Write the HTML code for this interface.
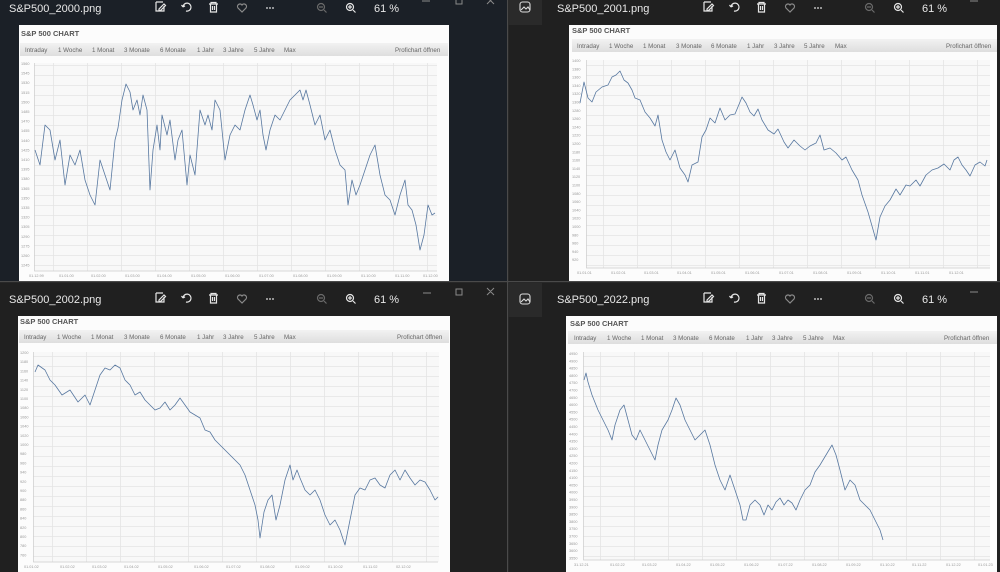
<!DOCTYPE html>
<html><head><meta charset="utf-8"><style>
html,body{margin:0;padding:0;background:#202020;width:1000px;height:572px;overflow:hidden}
svg{display:block;font-family:"Liberation Sans",sans-serif}
</style></head><body>
<svg width="1000" height="572" viewBox="0 0 1000 572" xmlns="http://www.w3.org/2000/svg">
<defs>
<pattern id="gh" width="34" height="10" patternUnits="userSpaceOnUse">
<rect width="34" height="10" fill="#f8f8f8"/>
<path d="M0 0.5H34M0.5 0V10" stroke="#e4e4e4" stroke-width="0.8" fill="none"/>
</pattern>
<linearGradient id="tb" x1="0" y1="0" x2="0" y2="1"><stop offset="0" stop-color="#f2f2f2"/><stop offset="1" stop-color="#dedede"/></linearGradient>
<g id="icons" fill="none" stroke="#e6e6e6" stroke-width="1.2">
<path d="M3 1h7M3 1v9h8v-5M6 8l5-5l1.5 1.5l-5 5h-1.5z"/>
<path d="M30 6a4 4 0 1 1 3 4M30 6l-1.5-2M30 6l2-1.2" />
<path d="M56 3h9M58 3v-1.5h5v1.5M57.5 3v8h6v-8M59.5 5v4M61.5 5v4"/>
<path d="M89 11l-4-4a2.3 2.3 0 0 1 4-3a2.3 2.3 0 0 1 4 3z" stroke="#8a8a8a"/>
<circle cx="114" cy="7" r="0.9" fill="#e6e6e6" stroke="none"/><circle cx="117" cy="7" r="0.9" fill="#e6e6e6" stroke="none"/><circle cx="120" cy="7" r="0.9" fill="#e6e6e6" stroke="none"/>
<circle cx="168" cy="6" r="3.5" stroke="#6a6a6a"/><path d="M171 9l2.5 2.5M166 6h4" stroke="#6a6a6a"/>
<circle cx="197" cy="6" r="3.5"/><path d="M200 9l2.5 2.5M195 6h4M197 4v4"/>
</g>
</defs>

<rect x="0" y="0" width="507" height="281" fill="#1b2027"/>
<rect x="508" y="0" width="492" height="281" fill="#202020"/>
<rect x="0" y="282" width="507" height="290" fill="#202020"/>
<rect x="508" y="282" width="492" height="290" fill="#202020"/>
<rect x="507" y="0" width="1.2" height="572" fill="#4a4a4a"/>
<rect x="0" y="281" width="1000" height="1.2" fill="#4a4a4a"/>
<rect x="508" y="0" width="34" height="25" fill="#2a2a2a"/>
<rect x="508" y="283" width="34" height="34" fill="#2a2a2a"/>

<g fill="#e8e8e8" font-size="11">
<text x="9" y="12">S&amp;P500_2000.png</text>
<text x="557" y="12">S&amp;P500_2001.png</text>
<text x="9" y="303">S&amp;P500_2002.png</text>
<text x="557" y="303">S&amp;P500_2022.png</text>
<text x="374" y="12">61 %</text>
<text x="922" y="12">61 %</text>
<text x="374" y="303">61 %</text>
<text x="922" y="303">61 %</text>
</g>
<use href="#icons" x="153" y="1"/>
<use href="#icons" x="701" y="1"/>
<use href="#icons" x="153" y="292"/>
<use href="#icons" x="701" y="292"/>
<g stroke="#8a8a8a" fill="none" stroke-width="1">
<path d="M422 1h8M456 -2h6v6h-6z M487 -3l7 7M494 -3l-7 7"/>
<path d="M970 1h8"/>
<path d="M423 293h8M456 289h6v6h-6zM487 288l7 7M494 288l-7 7"/>
<path d="M970 292h8"/>
</g>
<g fill="none" stroke="#ddd" stroke-width="1.1">
<rect x="520" y="2" width="10" height="10" rx="2.5"/><path d="M521 10l3-3l2 2l2-2l2 3"/>
<rect x="520" y="294" width="10" height="10" rx="2.5"/><path d="M521 302l3-3l2 2l2-2l2 3"/>
</g>

<svg x="19" y="25" width="430" height="256" overflow="hidden">
<rect width="430" height="256" fill="#fcfcfc"/>
<text x="2" y="11" font-size="7.5" font-weight="bold" fill="#555">S&amp;P 500 CHART</text>
<rect x="1" y="18" width="428" height="13" fill="url(#tb)"/>
<g font-size="6.2" fill="#666"><text x="6" y="27">Intraday</text><text x="39" y="27">1 Woche</text><text x="73" y="27">1 Monat</text><text x="105" y="27">3 Monate</text><text x="141" y="27">6 Monate</text><text x="178" y="27">1 Jahr</text><text x="204" y="27">3 Jahre</text><text x="235" y="27">5 Jahre</text><text x="265" y="27">Max</text><text x="376" y="27">Profichart öffnen</text></g>
<rect x="15" y="38" width="403" height="208" fill="url(#gh)"/>
<path d="M15.5 38V246H418" stroke="#ccc" fill="none" stroke-width="0.7"/>
<text font-size="3.8" fill="#999"><tspan x="2" y="40">1560</tspan><tspan x="2" dy="9.6">1545</tspan><tspan x="2" dy="9.6">1530</tspan><tspan x="2" dy="9.6">1515</tspan><tspan x="2" dy="9.6">1500</tspan><tspan x="2" dy="9.6">1485</tspan><tspan x="2" dy="9.6">1470</tspan><tspan x="2" dy="9.6">1455</tspan><tspan x="2" dy="9.6">1440</tspan><tspan x="2" dy="9.6">1425</tspan><tspan x="2" dy="9.6">1410</tspan><tspan x="2" dy="9.6">1395</tspan><tspan x="2" dy="9.6">1380</tspan><tspan x="2" dy="9.6">1365</tspan><tspan x="2" dy="9.6">1350</tspan><tspan x="2" dy="9.6">1335</tspan><tspan x="2" dy="9.6">1320</tspan><tspan x="2" dy="9.6">1305</tspan><tspan x="2" dy="9.6">1290</tspan><tspan x="2" dy="9.6">1275</tspan><tspan x="2" dy="9.6">1260</tspan><tspan x="2" dy="9.6">1245</tspan></text>
<g font-size="3.8" fill="#999"><text x="10" y="252">01.12.99</text><text x="40" y="252">01.01.00</text><text x="72" y="252">01.02.00</text><text x="106" y="252">01.03.00</text><text x="138" y="252">01.04.00</text><text x="172" y="252">01.05.00</text><text x="206" y="252">01.06.00</text><text x="240" y="252">01.07.00</text><text x="274" y="252">01.08.00</text><text x="308" y="252">01.09.00</text><text x="342" y="252">01.10.00</text><text x="376" y="252">01.11.00</text><text x="404" y="252">01.12.00</text></g>
</svg>

<svg x="569" y="25" width="428" height="256" overflow="hidden">
<rect width="440" height="256" fill="#fcfcfc"/>
<text x="3" y="8" font-size="7.5" font-weight="bold" fill="#555">S&amp;P 500 CHART</text>
<rect x="3" y="14" width="440" height="13" fill="url(#tb)"/>
<g font-size="6.2" fill="#666"><text x="8" y="23">Intraday</text><text x="40" y="23">1 Woche</text><text x="74" y="23">1 Monat</text><text x="107" y="23">3 Monate</text><text x="142" y="23">6 Monate</text><text x="178" y="23">1 Jahr</text><text x="205" y="23">3 Jahre</text><text x="235" y="23">5 Jahre</text><text x="266" y="23">Max</text><text x="377" y="23">Profichart öffnen</text></g>
<rect x="17" y="35" width="404" height="208" fill="url(#gh)"/>
<path d="M17.5 35V243H421" stroke="#ccc" fill="none" stroke-width="0.7"/>
<text font-size="3.8" fill="#999"><tspan x="3" y="37">1400</tspan><tspan x="3" dy="8.3">1380</tspan><tspan x="3" dy="8.3">1360</tspan><tspan x="3" dy="8.3">1340</tspan><tspan x="3" dy="8.3">1320</tspan><tspan x="3" dy="8.3">1300</tspan><tspan x="3" dy="8.3">1280</tspan><tspan x="3" dy="8.3">1260</tspan><tspan x="3" dy="8.3">1240</tspan><tspan x="3" dy="8.3">1220</tspan><tspan x="3" dy="8.3">1200</tspan><tspan x="3" dy="8.3">1180</tspan><tspan x="3" dy="8.3">1160</tspan><tspan x="3" dy="8.3">1140</tspan><tspan x="3" dy="8.3">1120</tspan><tspan x="3" dy="8.3">1100</tspan><tspan x="3" dy="8.3">1080</tspan><tspan x="3" dy="8.3">1060</tspan><tspan x="3" dy="8.3">1040</tspan><tspan x="3" dy="8.3">1020</tspan><tspan x="3" dy="8.3">1000</tspan><tspan x="3" dy="8.3">980</tspan><tspan x="3" dy="8.3">960</tspan><tspan x="3" dy="8.3">940</tspan><tspan x="3" dy="8.3">920</tspan></text>
<g font-size="3.8" fill="#999"><text x="8" y="249">01.01.01</text><text x="42" y="249">01.02.01</text><text x="75" y="249">01.03.01</text><text x="108" y="249">01.04.01</text><text x="142" y="249">01.05.01</text><text x="176" y="249">01.06.01</text><text x="210" y="249">01.07.01</text><text x="244" y="249">01.08.01</text><text x="278" y="249">01.09.01</text><text x="312" y="249">01.10.01</text><text x="346" y="249">01.11.01</text><text x="380" y="249">01.12.01</text></g>
</svg>

<svg x="18" y="316" width="432" height="256" overflow="hidden">
<rect width="432" height="256" fill="#fcfcfc"/>
<text x="2" y="8" font-size="7.5" font-weight="bold" fill="#555">S&amp;P 500 CHART</text>
<rect x="1" y="14" width="430" height="13" fill="url(#tb)"/>
<g font-size="6.2" fill="#666"><text x="6" y="23">Intraday</text><text x="39" y="23">1 Woche</text><text x="73" y="23">1 Monat</text><text x="106" y="23">3 Monate</text><text x="142" y="23">6 Monate</text><text x="179" y="23">1 Jahr</text><text x="205" y="23">3 Jahre</text><text x="236" y="23">5 Jahre</text><text x="266" y="23">Max</text><text x="379" y="23">Profichart öffnen</text></g>
<rect x="15" y="36" width="406" height="210" fill="url(#gh)"/>
<path d="M15.5 36V246H420" stroke="#ccc" fill="none" stroke-width="0.7"/>
<text font-size="3.8" fill="#999"><tspan x="2" y="38">1200</tspan><tspan x="2" dy="9.2">1180</tspan><tspan x="2" dy="9.2">1160</tspan><tspan x="2" dy="9.2">1140</tspan><tspan x="2" dy="9.2">1120</tspan><tspan x="2" dy="9.2">1100</tspan><tspan x="2" dy="9.2">1080</tspan><tspan x="2" dy="9.2">1060</tspan><tspan x="2" dy="9.2">1040</tspan><tspan x="2" dy="9.2">1020</tspan><tspan x="2" dy="9.2">1000</tspan><tspan x="2" dy="9.2">980</tspan><tspan x="2" dy="9.2">960</tspan><tspan x="2" dy="9.2">940</tspan><tspan x="2" dy="9.2">920</tspan><tspan x="2" dy="9.2">900</tspan><tspan x="2" dy="9.2">880</tspan><tspan x="2" dy="9.2">860</tspan><tspan x="2" dy="9.2">840</tspan><tspan x="2" dy="9.2">820</tspan><tspan x="2" dy="9.2">800</tspan><tspan x="2" dy="9.2">780</tspan><tspan x="2" dy="9.2">760</tspan></text>
<g font-size="3.8" fill="#999"><text x="6" y="252">01.01.02</text><text x="42" y="252">01.02.02</text><text x="74" y="252">01.03.02</text><text x="106" y="252">01.04.02</text><text x="140" y="252">01.05.02</text><text x="176" y="252">01.06.02</text><text x="208" y="252">01.07.02</text><text x="242" y="252">01.08.02</text><text x="277" y="252">01.09.02</text><text x="310" y="252">01.10.02</text><text x="345" y="252">01.11.02</text><text x="378" y="252">02.12.02</text></g>
</svg>

<svg x="566" y="316" width="431" height="256" overflow="hidden">
<rect width="440" height="256" fill="#fcfcfc"/>
<text x="4" y="10" font-size="7.5" font-weight="bold" fill="#555">S&amp;P 500 CHART</text>
<rect x="2" y="15" width="440" height="13" fill="url(#tb)"/>
<g font-size="6.2" fill="#666"><text x="8" y="24">Intraday</text><text x="41" y="24">1 Woche</text><text x="75" y="24">1 Monat</text><text x="107" y="24">3 Monate</text><text x="143" y="24">6 Monate</text><text x="180" y="24">1 Jahr</text><text x="206" y="24">3 Jahre</text><text x="237" y="24">5 Jahre</text><text x="267" y="24">Max</text><text x="378" y="24">Profichart öffnen</text></g>
<rect x="17" y="36" width="407" height="208" fill="url(#gh)"/>
<path d="M17.5 36V244H424" stroke="#ccc" fill="none" stroke-width="0.7"/>
<text font-size="3.8" fill="#999"><tspan x="3" y="39">4950</tspan><tspan x="3" dy="7.3">4900</tspan><tspan x="3" dy="7.3">4850</tspan><tspan x="3" dy="7.3">4800</tspan><tspan x="3" dy="7.3">4750</tspan><tspan x="3" dy="7.3">4700</tspan><tspan x="3" dy="7.3">4650</tspan><tspan x="3" dy="7.3">4600</tspan><tspan x="3" dy="7.3">4550</tspan><tspan x="3" dy="7.3">4500</tspan><tspan x="3" dy="7.3">4450</tspan><tspan x="3" dy="7.3">4400</tspan><tspan x="3" dy="7.3">4350</tspan><tspan x="3" dy="7.3">4300</tspan><tspan x="3" dy="7.3">4250</tspan><tspan x="3" dy="7.3">4200</tspan><tspan x="3" dy="7.3">4150</tspan><tspan x="3" dy="7.3">4100</tspan><tspan x="3" dy="7.3">4050</tspan><tspan x="3" dy="7.3">4000</tspan><tspan x="3" dy="7.3">3950</tspan><tspan x="3" dy="7.3">3900</tspan><tspan x="3" dy="7.3">3850</tspan><tspan x="3" dy="7.3">3800</tspan><tspan x="3" dy="7.3">3750</tspan><tspan x="3" dy="7.3">3700</tspan><tspan x="3" dy="7.3">3650</tspan><tspan x="3" dy="7.3">3600</tspan><tspan x="3" dy="7.3">3550</tspan></text>
<g font-size="3.8" fill="#999"><text x="8" y="250">31.12.21</text><text x="44" y="250">01.02.22</text><text x="76" y="250">01.03.22</text><text x="110" y="250">01.04.22</text><text x="144" y="250">01.05.22</text><text x="178" y="250">01.06.22</text><text x="212" y="250">01.07.22</text><text x="246" y="250">01.08.22</text><text x="280" y="250">01.09.22</text><text x="314" y="250">01.10.22</text><text x="346" y="250">01.11.22</text><text x="380" y="250">01.12.22</text><text x="412" y="250">01.01.23</text></g>
</svg>

<g fill="none" stroke="#5878a0" stroke-width="0.8" stroke-linejoin="round">
<polyline points="35,150 40,165 45,125 50,130 55,160 60,140 65,185 70,155 75,165 80,150 85,180 90,195 95,205 100,160 105,175 110,190 115,140 118,128 122,100 126,84 130,92 133,110 137,100 140,115 143,95 147,110 150,190 153,150 157,125 160,150 162,115 167,135 170,120 175,160 178,140 182,130 187,185 190,155 195,175 200,110 205,125 208,115 212,130 215,100 220,110 225,160 230,135 235,125 240,130 245,110 250,95 253,105 257,120 260,110 263,135 266,150 270,130 275,115 280,120 285,110 290,100 295,95 300,90 303,100 306,90 310,105 315,125 320,115 325,140 330,130 335,150 340,165 345,170 348,205 352,180 356,195 360,185 365,170 370,155 375,145 380,175 385,195 390,200 395,215 400,195 405,180 408,205 412,210 416,225 420,250 424,235 428,205 432,215 435,213"/>
<polyline points="580,103 584,82 588,98 592,102 596,92 602,87 608,85 612,77 616,75 620,71 624,80 628,83 632,90 635,98 640,100 645,112 650,118 655,126 658,115 662,140 666,152 670,160 675,150 680,168 685,175 688,182 692,165 698,162 702,137 706,130 710,118 715,123 720,108 725,120 730,115 735,114 740,102 742,97 746,103 750,112 754,116 758,109 762,120 768,130 774,134 778,129 784,142 788,148 794,140 800,146 805,150 810,146 816,143 820,135 824,150 830,148 836,153 842,160 846,157 852,170 858,180 862,195 868,212 872,226 876,240 880,217 885,206 890,200 896,189 900,195 906,185 910,186 916,180 920,186 926,175 932,170 938,168 944,164 950,170 954,160 958,157 962,165 966,170 970,176 975,165 980,162 985,166 987,160"/>
<polyline points="35,372 38,365 45,370 50,380 55,385 62,395 70,390 78,402 85,395 90,405 95,390 100,375 105,368 110,370 115,365 120,368 125,380 130,385 135,395 140,392 145,400 150,405 155,410 160,408 165,402 170,410 175,405 180,398 185,405 190,412 195,415 200,418 205,430 210,432 215,440 220,445 225,450 230,455 235,460 240,465 245,475 250,490 255,505 258,520 260,538 264,512 268,500 272,495 276,520 280,505 285,480 290,465 293,480 297,470 300,478 305,490 310,495 315,490 320,500 325,515 330,525 335,520 340,530 345,545 348,530 352,510 355,495 360,488 365,490 370,480 375,478 380,485 385,488 390,475 395,470 400,480 405,470 410,478 415,485 420,480 425,482 430,490 435,500 438,497"/>
<polyline points="584,380 586,373 588,382 592,395 598,410 603,420 608,430 612,440 615,425 620,410 624,405 628,420 632,435 636,440 640,430 645,440 650,450 655,460 658,445 662,430 668,420 672,410 676,398 680,405 685,420 690,430 695,440 700,435 705,430 710,445 715,465 720,480 725,490 730,475 735,490 740,505 743,520 746,520 750,505 755,500 760,505 764,515 768,505 772,510 776,502 780,498 784,505 788,500 792,503 796,510 800,500 805,490 810,485 815,472 820,465 826,455 832,445 836,455 840,470 845,490 850,480 855,485 860,500 865,505 870,510 875,520 880,530 883,540"/>
</g>
</svg>
</body></html>
